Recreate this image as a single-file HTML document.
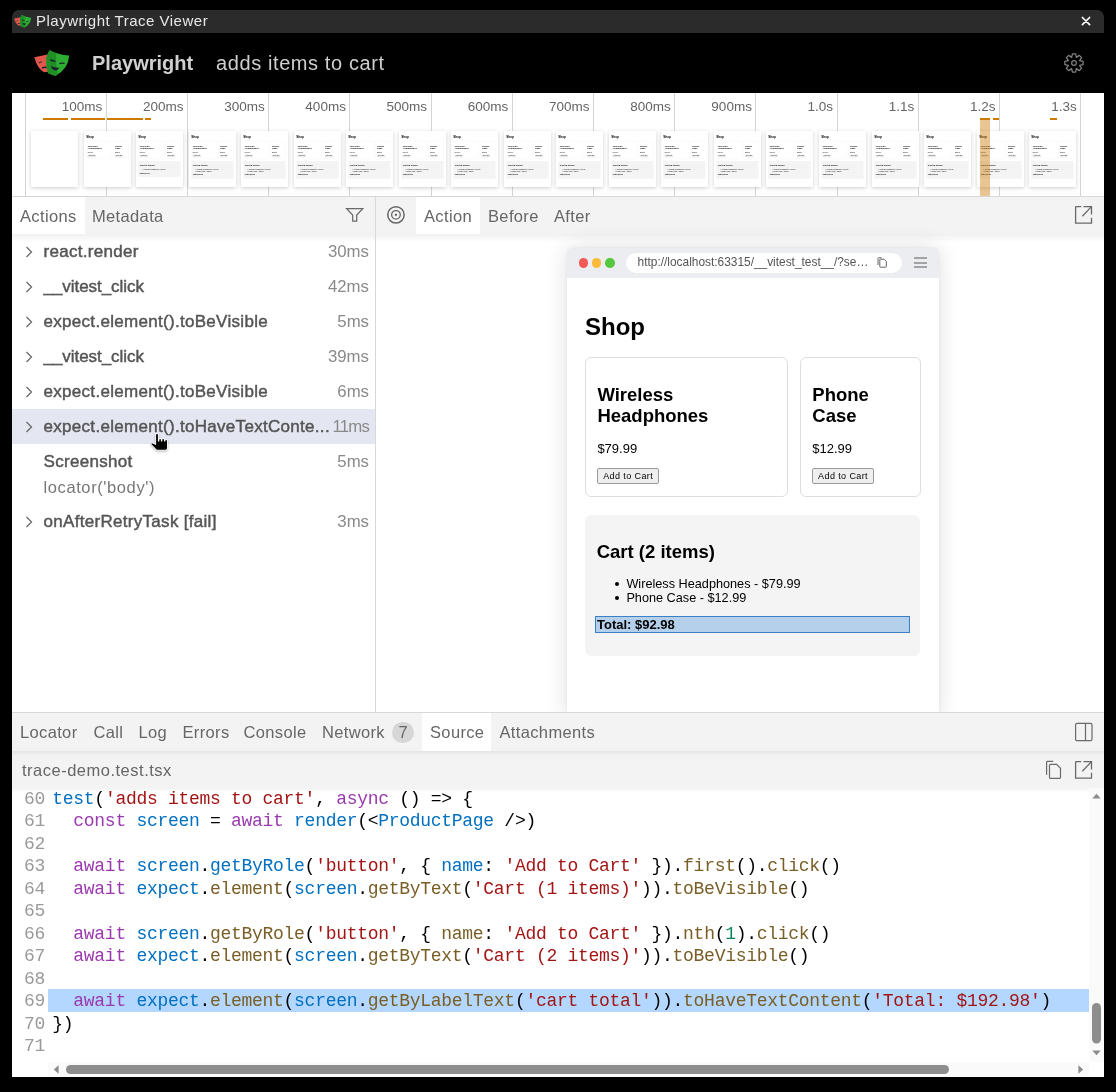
<!DOCTYPE html>
<html><head><meta charset="utf-8"><title>Playwright Trace Viewer</title>
<style>
*{box-sizing:border-box;margin:0;padding:0}
html,body{width:1116px;height:1092px;background:#000;overflow:hidden;font-family:"Liberation Sans",sans-serif;position:relative}
.a{position:absolute}
.t{position:absolute;white-space:nowrap;line-height:1}
.gl{position:absolute;top:93px;width:1px;height:103px;background:#d4d4d4}
.lbl{position:absolute;top:99.6px;width:80px;font-size:13.5px;color:#646464;text-align:right;line-height:1;white-space:nowrap}
.ob{position:absolute;top:118px;height:2px;background:#cc7a00}
.thumb{position:absolute;top:131px;width:47px;height:56px;background:#fff;box-shadow:0 1px 4px rgba(0,0,0,0.2);overflow:hidden}
.ts{position:absolute;left:0;top:0;width:372px;height:443px;transform:scale(0.12634);transform-origin:0 0}
.card{border:1px solid #dedede;border-radius:6px;background:#fff}
.pn{font-size:18.5px;font-weight:bold;color:#000}
.pr{font-size:13px;color:#000}
.btn{width:61.5px;height:16px;border:1px solid #9a9a9a;background:#efefef;border-radius:2px;font-size:9px;letter-spacing:0.4px;line-height:14px;text-align:center;color:#000;white-space:nowrap}
.li{font-size:12.7px;color:#000}
.tab{position:absolute;font-size:16.5px;letter-spacing:0.35px;color:#666;line-height:1;white-space:nowrap}
.rt{position:absolute;left:43.5px;font-size:17px;font-weight:normal;-webkit-text-stroke:0.45px #555;letter-spacing:0.3px;color:#555;line-height:1;white-space:nowrap}
.rd{position:absolute;left:289px;width:80px;text-align:right;font-size:16.8px;color:#8a8a8a;line-height:1;white-space:nowrap}
.ch{position:absolute;left:25px}
.ln{position:absolute;left:24px;width:34px;font-family:"Liberation Mono",monospace;font-size:18px;letter-spacing:-0.29px;color:#9a9a9a;line-height:1;white-space:pre}
.cl{position:absolute;left:52.3px;font-family:"Liberation Mono",monospace;font-size:18px;letter-spacing:-0.29px;color:#000;white-space:pre;line-height:1}
.k{color:#9b3aaf}.b{color:#0070c1}.s{color:#a31515}.f{color:#795e26}.n{color:#098658}
</style></head><body><div id="root" style="position:absolute;left:0;top:0;width:1116px;height:1092px;will-change:transform">

<!-- window bg -->
<div class="a" style="left:12px;top:93px;width:1092px;height:984px;background:#fff"></div>

<!-- title bar -->
<div class="a" style="left:12px;top:10px;width:1092px;height:23px;background:#2b2b2b;border-radius:7px 7px 0 0"></div>
<div class="t" style="left:36px;top:13px;font-size:15px;letter-spacing:0.5px;color:#e8e8e8">Playwright Trace Viewer</div>
<svg class="a" style="left:1081px;top:16px" width="11" height="11" viewBox="0 0 11 11"><path d="M1.4 1.5L8.6 8.7M8.6 1.5L1.4 8.7" stroke="#fff" stroke-width="1.7" stroke-linecap="round"/></svg>

<!-- header -->
<div class="t" style="left:92px;top:53px;font-size:20px;font-weight:bold;color:#d0d0d0">Playwright</div>
<div class="t" style="left:216px;top:52.8px;font-size:20px;color:#cfcfcf;letter-spacing:0.6px">adds items to cart</div>

<!-- timeline -->
<div class="a" style="left:12px;top:196px;width:1092px;height:1px;background:#d6d6d6"></div>
<div class="gl" style="left:25px"></div>
<div class="gl" style="left:106px"></div>
<div class="gl" style="left:187px"></div>
<div class="gl" style="left:268px"></div>
<div class="gl" style="left:349px"></div>
<div class="gl" style="left:431px"></div>
<div class="gl" style="left:512px"></div>
<div class="gl" style="left:593px"></div>
<div class="gl" style="left:674px"></div>
<div class="gl" style="left:755px"></div>
<div class="gl" style="left:837px"></div>
<div class="gl" style="left:918px"></div>
<div class="gl" style="left:999px"></div>
<div class="gl" style="left:1080px"></div>
<div class="lbl" style="left:22.3px">100ms</div>
<div class="lbl" style="left:103.5px">200ms</div>
<div class="lbl" style="left:184.7px">300ms</div>
<div class="lbl" style="left:265.9px">400ms</div>
<div class="lbl" style="left:347.1px">500ms</div>
<div class="lbl" style="left:428.3px">600ms</div>
<div class="lbl" style="left:509.5px">700ms</div>
<div class="lbl" style="left:590.7px">800ms</div>
<div class="lbl" style="left:671.9px">900ms</div>
<div class="lbl" style="left:753.1px">1.0s</div>
<div class="lbl" style="left:834.3px">1.1s</div>
<div class="lbl" style="left:915.5px">1.2s</div>
<div class="lbl" style="left:996.7px">1.3s</div>
<div class="ob" style="left:43px;width:25px"></div>
<div class="ob" style="left:71px;width:34px"></div>
<div class="ob" style="left:107px;width:36px"></div>
<div class="ob" style="left:145px;width:6px"></div>
<div class="ob" style="left:980px;width:10px"></div>
<div class="ob" style="left:993px;width:6px"></div>
<div class="ob" style="left:1050px;width:7px"></div>
<div class="thumb" style="left:31.0px"><div class="ts"></div></div>
<div class="thumb" style="left:83.5px"><div class="ts"><div class="t" style="left:18px;top:37.7px;font-size:24px;font-weight:bold;color:#000">Shop</div>
<div class="a card" style="left:18px;top:79px;width:203px;height:140px"></div>
<div class="a card" style="left:232.5px;top:79px;width:121px;height:140px"></div>
<div class="t pn" style="left:30.4px;top:108.7px">Wireless</div>
<div class="t pn" style="left:30.4px;top:129.7px">Headphones</div>
<div class="t pr" style="left:30.4px;top:164.7px">$79.99</div>
<div class="a btn" style="left:30.4px;top:190px">Add to Cart</div>
<div class="t pn" style="left:245.3px;top:108.7px">Phone</div>
<div class="t pn" style="left:245.3px;top:129.7px">Case</div>
<div class="t pr" style="left:245.3px;top:164.7px">$12.99</div>
<div class="a btn" style="left:245.3px;top:190px">Add to Cart</div></div></div>
<div class="thumb" style="left:136.1px"><div class="ts"><div class="t" style="left:18px;top:37.7px;font-size:24px;font-weight:bold;color:#000">Shop</div>
<div class="a card" style="left:18px;top:79px;width:203px;height:140px"></div>
<div class="a card" style="left:232.5px;top:79px;width:121px;height:140px"></div>
<div class="t pn" style="left:30.4px;top:108.7px">Wireless</div>
<div class="t pn" style="left:30.4px;top:129.7px">Headphones</div>
<div class="t pr" style="left:30.4px;top:164.7px">$79.99</div>
<div class="a btn" style="left:30.4px;top:190px">Add to Cart</div>
<div class="t pn" style="left:245.3px;top:108.7px">Phone</div>
<div class="t pn" style="left:245.3px;top:129.7px">Case</div>
<div class="t pr" style="left:245.3px;top:164.7px">$12.99</div>
<div class="a btn" style="left:245.3px;top:190px">Add to Cart</div>
<div class="a" style="left:18px;top:237px;width:335px;height:127.0px;background:#f4f4f4;border-radius:6px"></div>
<div class="t" style="left:29.7px;top:265.3px;font-size:18.5px;font-weight:bold;color:#000">Cart (1 items)</div>
<div class="a" style="left:47.8px;top:304.6px;width:4px;height:4px;border-radius:50%;background:#000"></div>
<div class="t li" style="left:59.4px;top:300px">Wireless Headphones - $79.99</div>
<div class="t" style="left:30px;top:326.2px;font-size:13px;font-weight:bold;color:#000">Total: $79.99</div></div></div>
<div class="thumb" style="left:188.6px"><div class="ts"><div class="t" style="left:18px;top:37.7px;font-size:24px;font-weight:bold;color:#000">Shop</div>
<div class="a card" style="left:18px;top:79px;width:203px;height:140px"></div>
<div class="a card" style="left:232.5px;top:79px;width:121px;height:140px"></div>
<div class="t pn" style="left:30.4px;top:108.7px">Wireless</div>
<div class="t pn" style="left:30.4px;top:129.7px">Headphones</div>
<div class="t pr" style="left:30.4px;top:164.7px">$79.99</div>
<div class="a btn" style="left:30.4px;top:190px">Add to Cart</div>
<div class="t pn" style="left:245.3px;top:108.7px">Phone</div>
<div class="t pn" style="left:245.3px;top:129.7px">Case</div>
<div class="t pr" style="left:245.3px;top:164.7px">$12.99</div>
<div class="a btn" style="left:245.3px;top:190px">Add to Cart</div>
<div class="a" style="left:18px;top:237px;width:335px;height:141.0px;background:#f4f4f4;border-radius:6px"></div>
<div class="t" style="left:29.7px;top:265.3px;font-size:18.5px;font-weight:bold;color:#000">Cart (2 items)</div>
<div class="a" style="left:47.8px;top:304.6px;width:4px;height:4px;border-radius:50%;background:#000"></div>
<div class="t li" style="left:59.4px;top:300px">Wireless Headphones - $79.99</div>
<div class="a" style="left:47.8px;top:318.6px;width:4px;height:4px;border-radius:50%;background:#000"></div>
<div class="t li" style="left:59.4px;top:314px">Phone Case - $12.99</div>
<div class="t" style="left:30px;top:340.2px;font-size:13px;font-weight:bold;color:#000">Total: $92.98</div></div></div>
<div class="thumb" style="left:241.1px"><div class="ts"><div class="t" style="left:18px;top:37.7px;font-size:24px;font-weight:bold;color:#000">Shop</div>
<div class="a card" style="left:18px;top:79px;width:203px;height:140px"></div>
<div class="a card" style="left:232.5px;top:79px;width:121px;height:140px"></div>
<div class="t pn" style="left:30.4px;top:108.7px">Wireless</div>
<div class="t pn" style="left:30.4px;top:129.7px">Headphones</div>
<div class="t pr" style="left:30.4px;top:164.7px">$79.99</div>
<div class="a btn" style="left:30.4px;top:190px">Add to Cart</div>
<div class="t pn" style="left:245.3px;top:108.7px">Phone</div>
<div class="t pn" style="left:245.3px;top:129.7px">Case</div>
<div class="t pr" style="left:245.3px;top:164.7px">$12.99</div>
<div class="a btn" style="left:245.3px;top:190px">Add to Cart</div>
<div class="a" style="left:18px;top:237px;width:335px;height:141.0px;background:#f4f4f4;border-radius:6px"></div>
<div class="t" style="left:29.7px;top:265.3px;font-size:18.5px;font-weight:bold;color:#000">Cart (2 items)</div>
<div class="a" style="left:47.8px;top:304.6px;width:4px;height:4px;border-radius:50%;background:#000"></div>
<div class="t li" style="left:59.4px;top:300px">Wireless Headphones - $79.99</div>
<div class="a" style="left:47.8px;top:318.6px;width:4px;height:4px;border-radius:50%;background:#000"></div>
<div class="t li" style="left:59.4px;top:314px">Phone Case - $12.99</div>
<div class="t" style="left:30px;top:340.2px;font-size:13px;font-weight:bold;color:#000">Total: $92.98</div></div></div>
<div class="thumb" style="left:293.6px"><div class="ts"><div class="t" style="left:18px;top:37.7px;font-size:24px;font-weight:bold;color:#000">Shop</div>
<div class="a card" style="left:18px;top:79px;width:203px;height:140px"></div>
<div class="a card" style="left:232.5px;top:79px;width:121px;height:140px"></div>
<div class="t pn" style="left:30.4px;top:108.7px">Wireless</div>
<div class="t pn" style="left:30.4px;top:129.7px">Headphones</div>
<div class="t pr" style="left:30.4px;top:164.7px">$79.99</div>
<div class="a btn" style="left:30.4px;top:190px">Add to Cart</div>
<div class="t pn" style="left:245.3px;top:108.7px">Phone</div>
<div class="t pn" style="left:245.3px;top:129.7px">Case</div>
<div class="t pr" style="left:245.3px;top:164.7px">$12.99</div>
<div class="a btn" style="left:245.3px;top:190px">Add to Cart</div>
<div class="a" style="left:18px;top:237px;width:335px;height:141.0px;background:#f4f4f4;border-radius:6px"></div>
<div class="t" style="left:29.7px;top:265.3px;font-size:18.5px;font-weight:bold;color:#000">Cart (2 items)</div>
<div class="a" style="left:47.8px;top:304.6px;width:4px;height:4px;border-radius:50%;background:#000"></div>
<div class="t li" style="left:59.4px;top:300px">Wireless Headphones - $79.99</div>
<div class="a" style="left:47.8px;top:318.6px;width:4px;height:4px;border-radius:50%;background:#000"></div>
<div class="t li" style="left:59.4px;top:314px">Phone Case - $12.99</div>
<div class="t" style="left:30px;top:340.2px;font-size:13px;font-weight:bold;color:#000">Total: $92.98</div></div></div>
<div class="thumb" style="left:346.2px"><div class="ts"><div class="t" style="left:18px;top:37.7px;font-size:24px;font-weight:bold;color:#000">Shop</div>
<div class="a card" style="left:18px;top:79px;width:203px;height:140px"></div>
<div class="a card" style="left:232.5px;top:79px;width:121px;height:140px"></div>
<div class="t pn" style="left:30.4px;top:108.7px">Wireless</div>
<div class="t pn" style="left:30.4px;top:129.7px">Headphones</div>
<div class="t pr" style="left:30.4px;top:164.7px">$79.99</div>
<div class="a btn" style="left:30.4px;top:190px">Add to Cart</div>
<div class="t pn" style="left:245.3px;top:108.7px">Phone</div>
<div class="t pn" style="left:245.3px;top:129.7px">Case</div>
<div class="t pr" style="left:245.3px;top:164.7px">$12.99</div>
<div class="a btn" style="left:245.3px;top:190px">Add to Cart</div>
<div class="a" style="left:18px;top:237px;width:335px;height:141.0px;background:#f4f4f4;border-radius:6px"></div>
<div class="t" style="left:29.7px;top:265.3px;font-size:18.5px;font-weight:bold;color:#000">Cart (2 items)</div>
<div class="a" style="left:47.8px;top:304.6px;width:4px;height:4px;border-radius:50%;background:#000"></div>
<div class="t li" style="left:59.4px;top:300px">Wireless Headphones - $79.99</div>
<div class="a" style="left:47.8px;top:318.6px;width:4px;height:4px;border-radius:50%;background:#000"></div>
<div class="t li" style="left:59.4px;top:314px">Phone Case - $12.99</div>
<div class="t" style="left:30px;top:340.2px;font-size:13px;font-weight:bold;color:#000">Total: $92.98</div></div></div>
<div class="thumb" style="left:398.7px"><div class="ts"><div class="t" style="left:18px;top:37.7px;font-size:24px;font-weight:bold;color:#000">Shop</div>
<div class="a card" style="left:18px;top:79px;width:203px;height:140px"></div>
<div class="a card" style="left:232.5px;top:79px;width:121px;height:140px"></div>
<div class="t pn" style="left:30.4px;top:108.7px">Wireless</div>
<div class="t pn" style="left:30.4px;top:129.7px">Headphones</div>
<div class="t pr" style="left:30.4px;top:164.7px">$79.99</div>
<div class="a btn" style="left:30.4px;top:190px">Add to Cart</div>
<div class="t pn" style="left:245.3px;top:108.7px">Phone</div>
<div class="t pn" style="left:245.3px;top:129.7px">Case</div>
<div class="t pr" style="left:245.3px;top:164.7px">$12.99</div>
<div class="a btn" style="left:245.3px;top:190px">Add to Cart</div>
<div class="a" style="left:18px;top:237px;width:335px;height:141.0px;background:#f4f4f4;border-radius:6px"></div>
<div class="t" style="left:29.7px;top:265.3px;font-size:18.5px;font-weight:bold;color:#000">Cart (2 items)</div>
<div class="a" style="left:47.8px;top:304.6px;width:4px;height:4px;border-radius:50%;background:#000"></div>
<div class="t li" style="left:59.4px;top:300px">Wireless Headphones - $79.99</div>
<div class="a" style="left:47.8px;top:318.6px;width:4px;height:4px;border-radius:50%;background:#000"></div>
<div class="t li" style="left:59.4px;top:314px">Phone Case - $12.99</div>
<div class="t" style="left:30px;top:340.2px;font-size:13px;font-weight:bold;color:#000">Total: $92.98</div></div></div>
<div class="thumb" style="left:451.2px"><div class="ts"><div class="t" style="left:18px;top:37.7px;font-size:24px;font-weight:bold;color:#000">Shop</div>
<div class="a card" style="left:18px;top:79px;width:203px;height:140px"></div>
<div class="a card" style="left:232.5px;top:79px;width:121px;height:140px"></div>
<div class="t pn" style="left:30.4px;top:108.7px">Wireless</div>
<div class="t pn" style="left:30.4px;top:129.7px">Headphones</div>
<div class="t pr" style="left:30.4px;top:164.7px">$79.99</div>
<div class="a btn" style="left:30.4px;top:190px">Add to Cart</div>
<div class="t pn" style="left:245.3px;top:108.7px">Phone</div>
<div class="t pn" style="left:245.3px;top:129.7px">Case</div>
<div class="t pr" style="left:245.3px;top:164.7px">$12.99</div>
<div class="a btn" style="left:245.3px;top:190px">Add to Cart</div>
<div class="a" style="left:18px;top:237px;width:335px;height:141.0px;background:#f4f4f4;border-radius:6px"></div>
<div class="t" style="left:29.7px;top:265.3px;font-size:18.5px;font-weight:bold;color:#000">Cart (2 items)</div>
<div class="a" style="left:47.8px;top:304.6px;width:4px;height:4px;border-radius:50%;background:#000"></div>
<div class="t li" style="left:59.4px;top:300px">Wireless Headphones - $79.99</div>
<div class="a" style="left:47.8px;top:318.6px;width:4px;height:4px;border-radius:50%;background:#000"></div>
<div class="t li" style="left:59.4px;top:314px">Phone Case - $12.99</div>
<div class="t" style="left:30px;top:340.2px;font-size:13px;font-weight:bold;color:#000">Total: $92.98</div></div></div>
<div class="thumb" style="left:503.8px"><div class="ts"><div class="t" style="left:18px;top:37.7px;font-size:24px;font-weight:bold;color:#000">Shop</div>
<div class="a card" style="left:18px;top:79px;width:203px;height:140px"></div>
<div class="a card" style="left:232.5px;top:79px;width:121px;height:140px"></div>
<div class="t pn" style="left:30.4px;top:108.7px">Wireless</div>
<div class="t pn" style="left:30.4px;top:129.7px">Headphones</div>
<div class="t pr" style="left:30.4px;top:164.7px">$79.99</div>
<div class="a btn" style="left:30.4px;top:190px">Add to Cart</div>
<div class="t pn" style="left:245.3px;top:108.7px">Phone</div>
<div class="t pn" style="left:245.3px;top:129.7px">Case</div>
<div class="t pr" style="left:245.3px;top:164.7px">$12.99</div>
<div class="a btn" style="left:245.3px;top:190px">Add to Cart</div>
<div class="a" style="left:18px;top:237px;width:335px;height:141.0px;background:#f4f4f4;border-radius:6px"></div>
<div class="t" style="left:29.7px;top:265.3px;font-size:18.5px;font-weight:bold;color:#000">Cart (2 items)</div>
<div class="a" style="left:47.8px;top:304.6px;width:4px;height:4px;border-radius:50%;background:#000"></div>
<div class="t li" style="left:59.4px;top:300px">Wireless Headphones - $79.99</div>
<div class="a" style="left:47.8px;top:318.6px;width:4px;height:4px;border-radius:50%;background:#000"></div>
<div class="t li" style="left:59.4px;top:314px">Phone Case - $12.99</div>
<div class="t" style="left:30px;top:340.2px;font-size:13px;font-weight:bold;color:#000">Total: $92.98</div></div></div>
<div class="thumb" style="left:556.3px"><div class="ts"><div class="t" style="left:18px;top:37.7px;font-size:24px;font-weight:bold;color:#000">Shop</div>
<div class="a card" style="left:18px;top:79px;width:203px;height:140px"></div>
<div class="a card" style="left:232.5px;top:79px;width:121px;height:140px"></div>
<div class="t pn" style="left:30.4px;top:108.7px">Wireless</div>
<div class="t pn" style="left:30.4px;top:129.7px">Headphones</div>
<div class="t pr" style="left:30.4px;top:164.7px">$79.99</div>
<div class="a btn" style="left:30.4px;top:190px">Add to Cart</div>
<div class="t pn" style="left:245.3px;top:108.7px">Phone</div>
<div class="t pn" style="left:245.3px;top:129.7px">Case</div>
<div class="t pr" style="left:245.3px;top:164.7px">$12.99</div>
<div class="a btn" style="left:245.3px;top:190px">Add to Cart</div>
<div class="a" style="left:18px;top:237px;width:335px;height:141.0px;background:#f4f4f4;border-radius:6px"></div>
<div class="t" style="left:29.7px;top:265.3px;font-size:18.5px;font-weight:bold;color:#000">Cart (2 items)</div>
<div class="a" style="left:47.8px;top:304.6px;width:4px;height:4px;border-radius:50%;background:#000"></div>
<div class="t li" style="left:59.4px;top:300px">Wireless Headphones - $79.99</div>
<div class="a" style="left:47.8px;top:318.6px;width:4px;height:4px;border-radius:50%;background:#000"></div>
<div class="t li" style="left:59.4px;top:314px">Phone Case - $12.99</div>
<div class="t" style="left:30px;top:340.2px;font-size:13px;font-weight:bold;color:#000">Total: $92.98</div></div></div>
<div class="thumb" style="left:608.8px"><div class="ts"><div class="t" style="left:18px;top:37.7px;font-size:24px;font-weight:bold;color:#000">Shop</div>
<div class="a card" style="left:18px;top:79px;width:203px;height:140px"></div>
<div class="a card" style="left:232.5px;top:79px;width:121px;height:140px"></div>
<div class="t pn" style="left:30.4px;top:108.7px">Wireless</div>
<div class="t pn" style="left:30.4px;top:129.7px">Headphones</div>
<div class="t pr" style="left:30.4px;top:164.7px">$79.99</div>
<div class="a btn" style="left:30.4px;top:190px">Add to Cart</div>
<div class="t pn" style="left:245.3px;top:108.7px">Phone</div>
<div class="t pn" style="left:245.3px;top:129.7px">Case</div>
<div class="t pr" style="left:245.3px;top:164.7px">$12.99</div>
<div class="a btn" style="left:245.3px;top:190px">Add to Cart</div>
<div class="a" style="left:18px;top:237px;width:335px;height:141.0px;background:#f4f4f4;border-radius:6px"></div>
<div class="t" style="left:29.7px;top:265.3px;font-size:18.5px;font-weight:bold;color:#000">Cart (2 items)</div>
<div class="a" style="left:47.8px;top:304.6px;width:4px;height:4px;border-radius:50%;background:#000"></div>
<div class="t li" style="left:59.4px;top:300px">Wireless Headphones - $79.99</div>
<div class="a" style="left:47.8px;top:318.6px;width:4px;height:4px;border-radius:50%;background:#000"></div>
<div class="t li" style="left:59.4px;top:314px">Phone Case - $12.99</div>
<div class="t" style="left:30px;top:340.2px;font-size:13px;font-weight:bold;color:#000">Total: $92.98</div></div></div>
<div class="thumb" style="left:661.4px"><div class="ts"><div class="t" style="left:18px;top:37.7px;font-size:24px;font-weight:bold;color:#000">Shop</div>
<div class="a card" style="left:18px;top:79px;width:203px;height:140px"></div>
<div class="a card" style="left:232.5px;top:79px;width:121px;height:140px"></div>
<div class="t pn" style="left:30.4px;top:108.7px">Wireless</div>
<div class="t pn" style="left:30.4px;top:129.7px">Headphones</div>
<div class="t pr" style="left:30.4px;top:164.7px">$79.99</div>
<div class="a btn" style="left:30.4px;top:190px">Add to Cart</div>
<div class="t pn" style="left:245.3px;top:108.7px">Phone</div>
<div class="t pn" style="left:245.3px;top:129.7px">Case</div>
<div class="t pr" style="left:245.3px;top:164.7px">$12.99</div>
<div class="a btn" style="left:245.3px;top:190px">Add to Cart</div>
<div class="a" style="left:18px;top:237px;width:335px;height:141.0px;background:#f4f4f4;border-radius:6px"></div>
<div class="t" style="left:29.7px;top:265.3px;font-size:18.5px;font-weight:bold;color:#000">Cart (2 items)</div>
<div class="a" style="left:47.8px;top:304.6px;width:4px;height:4px;border-radius:50%;background:#000"></div>
<div class="t li" style="left:59.4px;top:300px">Wireless Headphones - $79.99</div>
<div class="a" style="left:47.8px;top:318.6px;width:4px;height:4px;border-radius:50%;background:#000"></div>
<div class="t li" style="left:59.4px;top:314px">Phone Case - $12.99</div>
<div class="t" style="left:30px;top:340.2px;font-size:13px;font-weight:bold;color:#000">Total: $92.98</div></div></div>
<div class="thumb" style="left:713.9px"><div class="ts"><div class="t" style="left:18px;top:37.7px;font-size:24px;font-weight:bold;color:#000">Shop</div>
<div class="a card" style="left:18px;top:79px;width:203px;height:140px"></div>
<div class="a card" style="left:232.5px;top:79px;width:121px;height:140px"></div>
<div class="t pn" style="left:30.4px;top:108.7px">Wireless</div>
<div class="t pn" style="left:30.4px;top:129.7px">Headphones</div>
<div class="t pr" style="left:30.4px;top:164.7px">$79.99</div>
<div class="a btn" style="left:30.4px;top:190px">Add to Cart</div>
<div class="t pn" style="left:245.3px;top:108.7px">Phone</div>
<div class="t pn" style="left:245.3px;top:129.7px">Case</div>
<div class="t pr" style="left:245.3px;top:164.7px">$12.99</div>
<div class="a btn" style="left:245.3px;top:190px">Add to Cart</div>
<div class="a" style="left:18px;top:237px;width:335px;height:141.0px;background:#f4f4f4;border-radius:6px"></div>
<div class="t" style="left:29.7px;top:265.3px;font-size:18.5px;font-weight:bold;color:#000">Cart (2 items)</div>
<div class="a" style="left:47.8px;top:304.6px;width:4px;height:4px;border-radius:50%;background:#000"></div>
<div class="t li" style="left:59.4px;top:300px">Wireless Headphones - $79.99</div>
<div class="a" style="left:47.8px;top:318.6px;width:4px;height:4px;border-radius:50%;background:#000"></div>
<div class="t li" style="left:59.4px;top:314px">Phone Case - $12.99</div>
<div class="t" style="left:30px;top:340.2px;font-size:13px;font-weight:bold;color:#000">Total: $92.98</div></div></div>
<div class="thumb" style="left:766.4px"><div class="ts"><div class="t" style="left:18px;top:37.7px;font-size:24px;font-weight:bold;color:#000">Shop</div>
<div class="a card" style="left:18px;top:79px;width:203px;height:140px"></div>
<div class="a card" style="left:232.5px;top:79px;width:121px;height:140px"></div>
<div class="t pn" style="left:30.4px;top:108.7px">Wireless</div>
<div class="t pn" style="left:30.4px;top:129.7px">Headphones</div>
<div class="t pr" style="left:30.4px;top:164.7px">$79.99</div>
<div class="a btn" style="left:30.4px;top:190px">Add to Cart</div>
<div class="t pn" style="left:245.3px;top:108.7px">Phone</div>
<div class="t pn" style="left:245.3px;top:129.7px">Case</div>
<div class="t pr" style="left:245.3px;top:164.7px">$12.99</div>
<div class="a btn" style="left:245.3px;top:190px">Add to Cart</div>
<div class="a" style="left:18px;top:237px;width:335px;height:141.0px;background:#f4f4f4;border-radius:6px"></div>
<div class="t" style="left:29.7px;top:265.3px;font-size:18.5px;font-weight:bold;color:#000">Cart (2 items)</div>
<div class="a" style="left:47.8px;top:304.6px;width:4px;height:4px;border-radius:50%;background:#000"></div>
<div class="t li" style="left:59.4px;top:300px">Wireless Headphones - $79.99</div>
<div class="a" style="left:47.8px;top:318.6px;width:4px;height:4px;border-radius:50%;background:#000"></div>
<div class="t li" style="left:59.4px;top:314px">Phone Case - $12.99</div>
<div class="t" style="left:30px;top:340.2px;font-size:13px;font-weight:bold;color:#000">Total: $92.98</div></div></div>
<div class="thumb" style="left:819.0px"><div class="ts"><div class="t" style="left:18px;top:37.7px;font-size:24px;font-weight:bold;color:#000">Shop</div>
<div class="a card" style="left:18px;top:79px;width:203px;height:140px"></div>
<div class="a card" style="left:232.5px;top:79px;width:121px;height:140px"></div>
<div class="t pn" style="left:30.4px;top:108.7px">Wireless</div>
<div class="t pn" style="left:30.4px;top:129.7px">Headphones</div>
<div class="t pr" style="left:30.4px;top:164.7px">$79.99</div>
<div class="a btn" style="left:30.4px;top:190px">Add to Cart</div>
<div class="t pn" style="left:245.3px;top:108.7px">Phone</div>
<div class="t pn" style="left:245.3px;top:129.7px">Case</div>
<div class="t pr" style="left:245.3px;top:164.7px">$12.99</div>
<div class="a btn" style="left:245.3px;top:190px">Add to Cart</div>
<div class="a" style="left:18px;top:237px;width:335px;height:141.0px;background:#f4f4f4;border-radius:6px"></div>
<div class="t" style="left:29.7px;top:265.3px;font-size:18.5px;font-weight:bold;color:#000">Cart (2 items)</div>
<div class="a" style="left:47.8px;top:304.6px;width:4px;height:4px;border-radius:50%;background:#000"></div>
<div class="t li" style="left:59.4px;top:300px">Wireless Headphones - $79.99</div>
<div class="a" style="left:47.8px;top:318.6px;width:4px;height:4px;border-radius:50%;background:#000"></div>
<div class="t li" style="left:59.4px;top:314px">Phone Case - $12.99</div>
<div class="t" style="left:30px;top:340.2px;font-size:13px;font-weight:bold;color:#000">Total: $92.98</div></div></div>
<div class="thumb" style="left:871.5px"><div class="ts"><div class="t" style="left:18px;top:37.7px;font-size:24px;font-weight:bold;color:#000">Shop</div>
<div class="a card" style="left:18px;top:79px;width:203px;height:140px"></div>
<div class="a card" style="left:232.5px;top:79px;width:121px;height:140px"></div>
<div class="t pn" style="left:30.4px;top:108.7px">Wireless</div>
<div class="t pn" style="left:30.4px;top:129.7px">Headphones</div>
<div class="t pr" style="left:30.4px;top:164.7px">$79.99</div>
<div class="a btn" style="left:30.4px;top:190px">Add to Cart</div>
<div class="t pn" style="left:245.3px;top:108.7px">Phone</div>
<div class="t pn" style="left:245.3px;top:129.7px">Case</div>
<div class="t pr" style="left:245.3px;top:164.7px">$12.99</div>
<div class="a btn" style="left:245.3px;top:190px">Add to Cart</div>
<div class="a" style="left:18px;top:237px;width:335px;height:141.0px;background:#f4f4f4;border-radius:6px"></div>
<div class="t" style="left:29.7px;top:265.3px;font-size:18.5px;font-weight:bold;color:#000">Cart (2 items)</div>
<div class="a" style="left:47.8px;top:304.6px;width:4px;height:4px;border-radius:50%;background:#000"></div>
<div class="t li" style="left:59.4px;top:300px">Wireless Headphones - $79.99</div>
<div class="a" style="left:47.8px;top:318.6px;width:4px;height:4px;border-radius:50%;background:#000"></div>
<div class="t li" style="left:59.4px;top:314px">Phone Case - $12.99</div>
<div class="t" style="left:30px;top:340.2px;font-size:13px;font-weight:bold;color:#000">Total: $92.98</div></div></div>
<div class="thumb" style="left:924.0px"><div class="ts"><div class="t" style="left:18px;top:37.7px;font-size:24px;font-weight:bold;color:#000">Shop</div>
<div class="a card" style="left:18px;top:79px;width:203px;height:140px"></div>
<div class="a card" style="left:232.5px;top:79px;width:121px;height:140px"></div>
<div class="t pn" style="left:30.4px;top:108.7px">Wireless</div>
<div class="t pn" style="left:30.4px;top:129.7px">Headphones</div>
<div class="t pr" style="left:30.4px;top:164.7px">$79.99</div>
<div class="a btn" style="left:30.4px;top:190px">Add to Cart</div>
<div class="t pn" style="left:245.3px;top:108.7px">Phone</div>
<div class="t pn" style="left:245.3px;top:129.7px">Case</div>
<div class="t pr" style="left:245.3px;top:164.7px">$12.99</div>
<div class="a btn" style="left:245.3px;top:190px">Add to Cart</div>
<div class="a" style="left:18px;top:237px;width:335px;height:141.0px;background:#f4f4f4;border-radius:6px"></div>
<div class="t" style="left:29.7px;top:265.3px;font-size:18.5px;font-weight:bold;color:#000">Cart (2 items)</div>
<div class="a" style="left:47.8px;top:304.6px;width:4px;height:4px;border-radius:50%;background:#000"></div>
<div class="t li" style="left:59.4px;top:300px">Wireless Headphones - $79.99</div>
<div class="a" style="left:47.8px;top:318.6px;width:4px;height:4px;border-radius:50%;background:#000"></div>
<div class="t li" style="left:59.4px;top:314px">Phone Case - $12.99</div>
<div class="t" style="left:30px;top:340.2px;font-size:13px;font-weight:bold;color:#000">Total: $92.98</div></div></div>
<div class="thumb" style="left:976.5px"><div class="ts"><div class="t" style="left:18px;top:37.7px;font-size:24px;font-weight:bold;color:#000">Shop</div>
<div class="a card" style="left:18px;top:79px;width:203px;height:140px"></div>
<div class="a card" style="left:232.5px;top:79px;width:121px;height:140px"></div>
<div class="t pn" style="left:30.4px;top:108.7px">Wireless</div>
<div class="t pn" style="left:30.4px;top:129.7px">Headphones</div>
<div class="t pr" style="left:30.4px;top:164.7px">$79.99</div>
<div class="a btn" style="left:30.4px;top:190px">Add to Cart</div>
<div class="t pn" style="left:245.3px;top:108.7px">Phone</div>
<div class="t pn" style="left:245.3px;top:129.7px">Case</div>
<div class="t pr" style="left:245.3px;top:164.7px">$12.99</div>
<div class="a btn" style="left:245.3px;top:190px">Add to Cart</div>
<div class="a" style="left:18px;top:237px;width:335px;height:141.0px;background:#f4f4f4;border-radius:6px"></div>
<div class="t" style="left:29.7px;top:265.3px;font-size:18.5px;font-weight:bold;color:#000">Cart (2 items)</div>
<div class="a" style="left:47.8px;top:304.6px;width:4px;height:4px;border-radius:50%;background:#000"></div>
<div class="t li" style="left:59.4px;top:300px">Wireless Headphones - $79.99</div>
<div class="a" style="left:47.8px;top:318.6px;width:4px;height:4px;border-radius:50%;background:#000"></div>
<div class="t li" style="left:59.4px;top:314px">Phone Case - $12.99</div>
<div class="t" style="left:30px;top:340.2px;font-size:13px;font-weight:bold;color:#000">Total: $92.98</div></div></div>
<div class="thumb" style="left:1029.1px"><div class="ts"><div class="t" style="left:18px;top:37.7px;font-size:24px;font-weight:bold;color:#000">Shop</div>
<div class="a card" style="left:18px;top:79px;width:203px;height:140px"></div>
<div class="a card" style="left:232.5px;top:79px;width:121px;height:140px"></div>
<div class="t pn" style="left:30.4px;top:108.7px">Wireless</div>
<div class="t pn" style="left:30.4px;top:129.7px">Headphones</div>
<div class="t pr" style="left:30.4px;top:164.7px">$79.99</div>
<div class="a btn" style="left:30.4px;top:190px">Add to Cart</div>
<div class="t pn" style="left:245.3px;top:108.7px">Phone</div>
<div class="t pn" style="left:245.3px;top:129.7px">Case</div>
<div class="t pr" style="left:245.3px;top:164.7px">$12.99</div>
<div class="a btn" style="left:245.3px;top:190px">Add to Cart</div>
<div class="a" style="left:18px;top:237px;width:335px;height:141.0px;background:#f4f4f4;border-radius:6px"></div>
<div class="t" style="left:29.7px;top:265.3px;font-size:18.5px;font-weight:bold;color:#000">Cart (2 items)</div>
<div class="a" style="left:47.8px;top:304.6px;width:4px;height:4px;border-radius:50%;background:#000"></div>
<div class="t li" style="left:59.4px;top:300px">Wireless Headphones - $79.99</div>
<div class="a" style="left:47.8px;top:318.6px;width:4px;height:4px;border-radius:50%;background:#000"></div>
<div class="t li" style="left:59.4px;top:314px">Phone Case - $12.99</div>
<div class="t" style="left:30px;top:340.2px;font-size:13px;font-weight:bold;color:#000">Total: $92.98</div></div></div>
<div class="a" style="left:980px;top:118px;width:10px;height:78px;background:rgba(204,122,0,0.43)"></div>

<!-- left pane -->
<div class="a" style="left:12px;top:197px;width:363px;height:37px;background:#f3f3f3"></div>
<div class="a" style="left:12px;top:197px;width:73px;height:37px;background:#fff"></div>
<div class="tab" style="left:20px;top:208px">Actions</div>
<div class="tab" style="left:92px;top:208px">Metadata</div>
<svg class="a" style="left:344px;top:206px" width="22" height="18" viewBox="0 0 22 18"><path d="M2.6 2.6H18.8L12.7 9V15.2H8.7V9Z" fill="none" stroke="#6a6a6a" stroke-width="1.25" stroke-linejoin="miter"/></svg>
<div class="a" style="left:375px;top:197px;width:1px;height:516px;background:#d8d8d8"></div>


<!-- actions -->
<div class="a" style="left:12px;top:409px;width:363px;height:35px;background:#e4e6f1"></div>
<svg class="ch" style="top:246px" width="8" height="12" viewBox="0 0 8 12"><path d="M1.5 1L6.5 6L1.5 11" fill="none" stroke="#6a6a6a" stroke-width="1.3"/></svg>
<div class="rt" style="top:243px">react.render</div>
<div class="rd" style="top:243.6px">30ms</div>
<svg class="ch" style="top:281px" width="8" height="12" viewBox="0 0 8 12"><path d="M1.5 1L6.5 6L1.5 11" fill="none" stroke="#6a6a6a" stroke-width="1.3"/></svg>
<div class="rt" style="top:278px;letter-spacing:-0.05px">__vitest_click</div>
<div class="rd" style="top:278.6px">42ms</div>
<svg class="ch" style="top:316px" width="8" height="12" viewBox="0 0 8 12"><path d="M1.5 1L6.5 6L1.5 11" fill="none" stroke="#6a6a6a" stroke-width="1.3"/></svg>
<div class="rt" style="top:313px">expect.element().toBeVisible</div>
<div class="rd" style="top:313.6px">5ms</div>
<svg class="ch" style="top:351px" width="8" height="12" viewBox="0 0 8 12"><path d="M1.5 1L6.5 6L1.5 11" fill="none" stroke="#6a6a6a" stroke-width="1.3"/></svg>
<div class="rt" style="top:348px;letter-spacing:-0.05px">__vitest_click</div>
<div class="rd" style="top:348.6px">39ms</div>
<svg class="ch" style="top:386px" width="8" height="12" viewBox="0 0 8 12"><path d="M1.5 1L6.5 6L1.5 11" fill="none" stroke="#6a6a6a" stroke-width="1.3"/></svg>
<div class="rt" style="top:383px">expect.element().toBeVisible</div>
<div class="rd" style="top:383.6px">6ms</div>
<svg class="ch" style="top:421px" width="8" height="12" viewBox="0 0 8 12"><path d="M1.5 1L6.5 6L1.5 11" fill="none" stroke="#6a6a6a" stroke-width="1.3"/></svg>
<div class="rt" style="top:418px">expect.element().toHaveTextConte...</div>
<div class="rd" style="top:418.6px;letter-spacing:-0.8px">11ms</div>
<div class="rt" style="top:453px">Screenshot</div>
<div class="rd" style="top:453.6px">5ms</div>
<div class="t" style="left:43.5px;top:478.5px;font-size:16.5px;letter-spacing:0.6px;color:#777">locator('body')</div>
<svg class="ch" style="top:516px" width="8" height="12" viewBox="0 0 8 12"><path d="M1.5 1L6.5 6L1.5 11" fill="none" stroke="#6a6a6a" stroke-width="1.3"/></svg>
<div class="rt" style="top:513px">onAfterRetryTask [fail]</div>
<div class="rd" style="top:513.6px">3ms</div>

<!-- right pane -->
<div class="a" style="left:376px;top:197px;width:728px;height:37px;background:#f3f3f3"></div>
<div class="a" style="left:416px;top:197px;width:64px;height:37px;background:#fff"></div>
<div class="tab" style="left:424px;top:208px">Action</div>
<div class="tab" style="left:488px;top:208px">Before</div>
<div class="tab" style="left:554px;top:208px">After</div>

<!-- snapshot -->
<div class="a" style="left:567px;top:248px;width:372px;height:470px;background:#fff;border-radius:5px 5px 0 0;box-shadow:0 0 3px rgba(0,0,0,0.06),0 0 22px rgba(0,0,0,0.13);overflow:hidden">
  <div class="a" style="left:0;top:0;width:372px;height:29.5px;background:#ebedf0"></div>
  <div class="a" style="left:12px;top:10.3px;width:9.4px;height:9.4px;border-radius:50%;background:#f25a55"></div>
  <div class="a" style="left:25.1px;top:10.3px;width:9.4px;height:9.4px;border-radius:50%;background:#fbbb3a"></div>
  <div class="a" style="left:38.3px;top:10.3px;width:9.4px;height:9.4px;border-radius:50%;background:#56c840"></div>
  <div class="a" style="left:59.2px;top:5px;width:276px;height:20.2px;border-radius:10px;background:#fff"></div>
  <div class="t" style="left:70.6px;top:9px;font-size:11.9px;color:#555">http://localhost:63315/__vitest_test__/?se…</div>
  <svg class="a" style="left:309px;top:8px" width="12" height="13" viewBox="0 0 12 13" fill="none" stroke="#666" stroke-width="1"><path d="M2 9V2.4Q2 1.8 2.6 1.8H5.6"/><path d="M3.8 10.6V3.8Q3.8 3.2 4.4 3.2H8L10.3 5.5V10.6Q10.3 11.2 9.7 11.2H4.4Q3.8 11.2 3.8 10.6Z"/></svg>
  <div class="a" style="left:347px;top:9.3px;width:13px;height:1.8px;background:#a3a3a3"></div>
  <div class="a" style="left:347px;top:13.9px;width:13px;height:1.8px;background:#a3a3a3"></div>
  <div class="a" style="left:347px;top:18.3px;width:13px;height:1.8px;background:#a3a3a3"></div>
  <div class="a" style="left:0;top:29.5px;width:372px;height:441px">
<div class="t" style="left:18px;top:37.7px;font-size:24px;font-weight:bold;color:#000">Shop</div>
<div class="a card" style="left:18px;top:79px;width:203px;height:140px"></div>
<div class="a card" style="left:232.5px;top:79px;width:121px;height:140px"></div>
<div class="t pn" style="left:30.4px;top:108.7px">Wireless</div>
<div class="t pn" style="left:30.4px;top:129.7px">Headphones</div>
<div class="t pr" style="left:30.4px;top:164.7px">$79.99</div>
<div class="a btn" style="left:30.4px;top:190px">Add to Cart</div>
<div class="t pn" style="left:245.3px;top:108.7px">Phone</div>
<div class="t pn" style="left:245.3px;top:129.7px">Case</div>
<div class="t pr" style="left:245.3px;top:164.7px">$12.99</div>
<div class="a btn" style="left:245.3px;top:190px">Add to Cart</div>
<div class="a" style="left:18px;top:237px;width:335px;height:141.0px;background:#f4f4f4;border-radius:6px"></div>
<div class="t" style="left:29.7px;top:265.3px;font-size:18.5px;font-weight:bold;color:#000">Cart (2 items)</div>
<div class="a" style="left:47.8px;top:304.6px;width:4px;height:4px;border-radius:50%;background:#000"></div>
<div class="t li" style="left:59.4px;top:300px">Wireless Headphones - $79.99</div>
<div class="a" style="left:47.8px;top:318.6px;width:4px;height:4px;border-radius:50%;background:#000"></div>
<div class="t li" style="left:59.4px;top:314px">Phone Case - $12.99</div>
<div class="a" style="left:28.3px;top:338px;width:314.5px;height:17.6px;background:#b4d0ea;border:1.5px solid #3a80c8"></div>
<div class="t" style="left:30px;top:340.2px;font-size:13px;font-weight:bold;color:#000">Total: $92.98</div>
  </div>
</div>

<!-- bottom pane -->
<div class="a" style="left:12px;top:712px;width:1092px;height:1px;background:#d8d8d8"></div>
<div class="a" style="left:12px;top:713px;width:1092px;height:38px;background:#f3f3f3"></div>
<div class="a" style="left:422px;top:713px;width:69px;height:38px;background:#fff"></div>
<div class="tab" style="left:20px;top:724px">Locator</div>
<div class="tab" style="left:93.5px;top:724px">Call</div>
<div class="tab" style="left:138.5px;top:724px">Log</div>
<div class="tab" style="left:182.5px;top:724px">Errors</div>
<div class="tab" style="left:243.5px;top:724px">Console</div>
<div class="tab" style="left:322px;top:724px">Network</div>
<div class="a" style="left:392px;top:722px;width:22px;height:20.5px;border-radius:11px;background:#d6d6d6"></div>
<div class="tab" style="left:398.5px;top:724px">7</div>
<div class="tab" style="left:430px;top:724px">Source</div>
<div class="tab" style="left:499.5px;top:724px">Attachments</div>

<div class="a" style="left:12px;top:751px;width:1092px;height:37px;background:#f3f3f3"></div>
<div class="t" style="left:22px;top:762px;font-size:16.5px;letter-spacing:0.5px;color:#666">trace-demo.test.tsx</div>


<!-- code -->
<div class="a" style="left:48px;top:989px;width:1041px;height:23px;background:#b3d7ff"></div>
<div class="ln" style="top:790.00px">60</div><div class="cl" style="top:790.00px"><span class="b">test</span>(<span class="s">'adds items to cart'</span>, <span class="k">async</span> () =&gt; {</div>
<div class="ln" style="top:812.45px">61</div><div class="cl" style="top:812.45px">  <span class="k">const</span> <span class="b">screen</span> = <span class="k">await</span> <span class="b">render</span>(&lt;<span class="b">ProductPage</span> /&gt;)</div>
<div class="ln" style="top:834.90px">62</div><div class="cl" style="top:834.90px"></div>
<div class="ln" style="top:857.35px">63</div><div class="cl" style="top:857.35px">  <span class="k">await</span> <span class="b">screen</span>.<span class="b">getByRole</span>(<span class="s">'button'</span>, { <span class="b">name</span>: <span class="s">'Add to Cart'</span> }).<span class="f">first</span>().<span class="f">click</span>()</div>
<div class="ln" style="top:879.80px">64</div><div class="cl" style="top:879.80px">  <span class="k">await</span> <span class="b">expect</span>.<span class="f">element</span>(<span class="b">screen</span>.<span class="f">getByText</span>(<span class="s">'Cart (1 items)'</span>)).<span class="f">toBeVisible</span>()</div>
<div class="ln" style="top:902.25px">65</div><div class="cl" style="top:902.25px"></div>
<div class="ln" style="top:924.70px">66</div><div class="cl" style="top:924.70px">  <span class="k">await</span> <span class="b">screen</span>.<span class="f">getByRole</span>(<span class="s">'button'</span>, { <span class="f">name</span>: <span class="s">'Add to Cart'</span> }).<span class="f">nth</span>(<span class="n">1</span>).<span class="f">click</span>()</div>
<div class="ln" style="top:947.15px">67</div><div class="cl" style="top:947.15px">  <span class="k">await</span> <span class="b">expect</span>.<span class="f">element</span>(<span class="b">screen</span>.<span class="f">getByText</span>(<span class="s">'Cart (2 items)'</span>)).<span class="f">toBeVisible</span>()</div>
<div class="ln" style="top:969.60px">68</div><div class="cl" style="top:969.60px"></div>
<div class="ln" style="top:992.05px">69</div><div class="cl" style="top:992.05px">  <span class="k">await</span> <span class="b">expect</span>.<span class="f">element</span>(<span class="b">screen</span>.<span class="f">getByLabelText</span>(<span class="s">'cart total'</span>)).<span class="f">toHaveTextContent</span>(<span class="s">'Total: $192.98'</span>)</div>
<div class="ln" style="top:1014.50px">70</div><div class="cl" style="top:1014.50px">})</div>
<div class="ln" style="top:1036.95px">71</div><div class="cl" style="top:1036.95px"></div>



<!-- shadows -->
<div class="a" style="left:12px;top:234px;width:363px;height:8px;background:linear-gradient(rgba(0,0,0,0.06),rgba(0,0,0,0))"></div>
<div class="a" style="left:376px;top:234px;width:728px;height:8px;background:linear-gradient(rgba(0,0,0,0.06),rgba(0,0,0,0))"></div>
<div class="a" style="left:12px;top:751px;width:1092px;height:5px;background:linear-gradient(rgba(0,0,0,0.06),rgba(0,0,0,0))"></div>
<div class="a" style="left:12px;top:788px;width:1077px;height:4px;background:linear-gradient(rgba(0,0,0,0.05),rgba(0,0,0,0))"></div>
<!-- vertical scrollbar -->
<div class="a" style="left:1089px;top:788px;width:15px;height:274px;background:#fafafa"></div>
<svg class="a" style="left:1089px;top:788px" width="15" height="274" viewBox="0 0 15 274"><path d="M3.3 10.6L7.5 5.8L11.7 10.6Z" fill="#8c8c8c"/><path d="M3.3 262.4L7.5 267.2L11.7 262.4Z" fill="#8c8c8c"/><rect x="3" y="215" width="9" height="40.5" rx="4.5" fill="#8d8d8d"/></svg>
<!-- horizontal scrollbar -->
<div class="a" style="left:48px;top:1062px;width:1041px;height:15px;background:#fafafa"></div>
<svg class="a" style="left:48px;top:1062px" width="1056" height="15" viewBox="0 0 1056 15"><path d="M10.6 3.3L5.8 7.5L10.6 11.7Z" fill="#8c8c8c"/><path d="M1030.4 3.3L1035.2 7.5L1030.4 11.7Z" fill="#8c8c8c"/><rect x="18" y="3" width="883" height="9" rx="4.5" fill="#8d8d8d"/></svg>

<!-- logos -->
<svg class="a" style="left:34px;top:50px" width="36" height="27" viewBox="0 0 36 27"><path d="M0.3 7.3 L13.5 4.6 L14.2 21.8 L10 22.2 Q3.5 19 0.3 7.3Z" fill="#e2574c"/>
<path d="M4.6 12.4 Q6.2 11.4 8 11.6 L7.7 12.6 Q6 12.5 4.9 13.4Z" fill="#1b2030"/>
<path d="M7.8 17.6 Q9.5 16.4 12.6 16.6 L12.8 18.2 Q10 17.6 8 19Z" fill="#1b2030"/>
<path d="M15.6 0.2 Q24 4.5 35.2 5.6 Q34.5 19 21.5 25.8 Q15.5 24.5 13.8 22.6 Q11.8 14 12.3 8.2 Q13.5 3.5 15.6 0.2Z" fill="#2ead33"/>
<path d="M15.6 0.2 Q19 2.3 22.2 3.4 Q21.5 14 23.6 25 L21.5 25.8 Q15.5 24.5 13.8 22.6 Q11.8 14 12.3 8.2 Q13.5 3.5 15.6 0.2Z" fill="#1f8f25"/>
<path d="M16 9.6 Q18.5 9.2 21.6 10.8 L21.3 12 Q18.5 11 16.5 11.2Z" fill="#1b2030"/>
<path d="M25.2 13 Q28 12 30.5 12.8 L30.6 14 Q27.8 13.2 25.4 14.2Z" fill="#1b2030"/>
<path d="M16.8 15.8 Q20.5 18 25.5 17.6 Q24.5 20.2 21 20.4 Q17.8 19.8 16.8 15.8Z" fill="#1b2030"/>
</svg>
<svg class="a" style="left:14px;top:14.5px" width="17.5" height="13.1" viewBox="0 0 36 27"><path d="M0.3 7.3 L13.5 4.6 L14.2 21.8 L10 22.2 Q3.5 19 0.3 7.3Z" fill="#e2574c"/>
<path d="M4.6 12.4 Q6.2 11.4 8 11.6 L7.7 12.6 Q6 12.5 4.9 13.4Z" fill="#1b2030"/>
<path d="M7.8 17.6 Q9.5 16.4 12.6 16.6 L12.8 18.2 Q10 17.6 8 19Z" fill="#1b2030"/>
<path d="M15.6 0.2 Q24 4.5 35.2 5.6 Q34.5 19 21.5 25.8 Q15.5 24.5 13.8 22.6 Q11.8 14 12.3 8.2 Q13.5 3.5 15.6 0.2Z" fill="#2ead33"/>
<path d="M15.6 0.2 Q19 2.3 22.2 3.4 Q21.5 14 23.6 25 L21.5 25.8 Q15.5 24.5 13.8 22.6 Q11.8 14 12.3 8.2 Q13.5 3.5 15.6 0.2Z" fill="#1f8f25"/>
<path d="M16 9.6 Q18.5 9.2 21.6 10.8 L21.3 12 Q18.5 11 16.5 11.2Z" fill="#1b2030"/>
<path d="M25.2 13 Q28 12 30.5 12.8 L30.6 14 Q27.8 13.2 25.4 14.2Z" fill="#1b2030"/>
<path d="M16.8 15.8 Q20.5 18 25.5 17.6 Q24.5 20.2 21 20.4 Q17.8 19.8 16.8 15.8Z" fill="#1b2030"/>
</svg>
<!-- gear -->
<svg class="a" style="left:1060px;top:49px" width="28" height="28" viewBox="0 0 28 28"><path d="M11.67 8.36 L12.39 4.84 L15.61 4.84 L16.33 8.36 L19.33 6.38 L21.62 8.67 L19.64 11.67 L23.16 12.39 L23.16 15.61 L19.64 16.33 L21.62 19.33 L19.33 21.62 L16.33 19.64 L15.61 23.16 L12.39 23.16 L11.67 19.64 L8.67 21.62 L6.38 19.33 L8.36 16.33 L4.84 15.61 L4.84 12.39 L8.36 11.67 L6.38 8.67 L8.67 6.38Z" fill="none" stroke="#808080" stroke-width="1.25" stroke-linejoin="round"/><circle cx="14" cy="14" r="2.3" fill="none" stroke="#808080" stroke-width="1.25"/></svg>
<!-- target icon -->
<svg class="a" style="left:383px;top:202px" width="26" height="26" viewBox="0 0 26 26"><circle cx="12.94" cy="12.85" r="8.2" fill="none" stroke="#666" stroke-width="1.5"/><circle cx="12.94" cy="12.85" r="4.3" fill="none" stroke="#666" stroke-width="1.3"/><circle cx="12.94" cy="12.85" r="1.15" fill="#555"/></svg>
<!-- open icon right pane -->
<svg class="a" style="left:1074px;top:205px" width="20" height="20" viewBox="0 0 20 20" fill="none" stroke="#6a6a6a" stroke-width="1.3"><path d="M1.6 1.6H7.2M9.5 1.6H17.5V9.6M17.5 12.8V18.2H1.6V1.6M8.3 11.3L17.5 1.6"/></svg>
<!-- split icon -->
<svg class="a" style="left:1074px;top:722px" width="20" height="20" viewBox="0 0 20 20" fill="none" stroke="#6a6a6a" stroke-width="1.2"><rect x="1.6" y="1.3" width="16.4" height="17.4" rx="1.5"/><path d="M11.5 1.3V18.7"/></svg>
<!-- copy icon source -->
<svg class="a" style="left:1044px;top:759px" width="20" height="22" viewBox="0 0 20 22" fill="none" stroke="#6a6a6a" stroke-width="1.2"><path d="M2.6 15.8V3.3Q2.6 2.4 3.5 2.4H9.2"/><path d="M5.5 18.6V6.2Q5.5 5.3 6.4 5.3H12.6L16.5 9.3V18.6Q16.5 19.4 15.7 19.4H6.3Q5.5 19.4 5.5 18.6Z"/></svg>
<!-- open icon source -->
<svg class="a" style="left:1074px;top:760px" width="20" height="20" viewBox="0 0 20 20" fill="none" stroke="#6a6a6a" stroke-width="1.3"><path d="M1.6 1.6H7.2M9.5 1.6H17.5V9.6M17.5 12.8V18.2H1.6V1.6M8.3 11.3L17.5 1.6"/></svg>
<!-- cursor -->
<svg class="a" style="left:145px;top:425px" width="30" height="30" viewBox="0 0 30 30"><path d="M11.1 9.8Q11.1 9.1 12 9.1Q12.9 9.1 12.9 9.8L12.9 16.6L14.3 16.6L14.3 14.5Q14.3 14.1 15.1 14.1Q15.9 14.1 15.9 14.5L15.9 16.6L17.3 16.6L17.3 14.5Q17.3 14.1 18.1 14.1Q19 14.1 19 14.5L19 16.6L20.3 16.6L20.3 15.5Q20.3 15.1 21.1 15.1Q22 15.1 22 15.5L22 23.4L20.9 24.7L11.8 24.7L6.3 19Q6.5 18.2 7.5 18.4L11.1 20Z" fill="#000" stroke="#fff" stroke-width="1.5" stroke-linejoin="round" paint-order="stroke" style="filter:drop-shadow(0 1px 1px rgba(0,0,0,0.3))"/></svg>

</div></body></html>
